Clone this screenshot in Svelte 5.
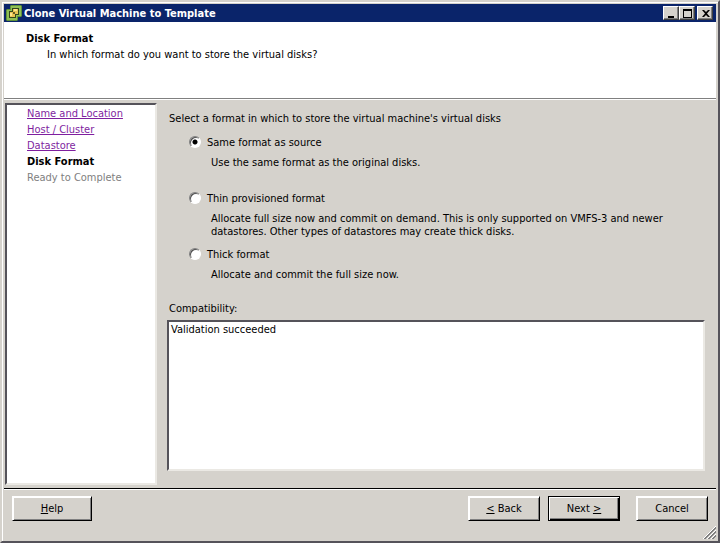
<script lang="ts">
  const steps = [
    { label: "Name and Location", state: "done" },
    { label: "Host / Cluster", state: "done" },
    { label: "Datastore", state: "done" },
    { label: "Disk Format", state: "current" },
    { label: "Ready to Complete", state: "pending" },
  ];

  const formats = [
    {
      id: "same",
      label: "Same format as source",
      description: "Use the same format as the original disks.",
    },
    {
      id: "thin",
      label: "Thin provisioned format",
      description:
        "Allocate full size now and commit on demand. This is only supported on VMFS-3 and newer datastores. Other types of datastores may create thick disks.",
    },
    {
      id: "thick",
      label: "Thick format",
      description: "Allocate and commit the full size now.",
    },
  ];

  let format = $state("same");
  let compatibility = $state("Validation succeeded");
</script>

<div class="window">
  <header class="titlebar">
    <svg class="app-icon" width="16" height="16" viewBox="0 0 16 16">
      <path d="M4 4V1l1-1h10l1 1v10l-1 1h-3v3l-1 1H1l-1-1V5l1-1z" fill="#5f9138" />
      <path d="M5 5V1h10v10h-4v4H1V5z" fill="#8fc055" />
      <path d="M6 3h7v7h-3v3H3V6h3z" fill="#33451d" />
      <path d="M7 4h5v5H7z" fill="#e9c552" />
      <path d="M4 7h5v5H4z" fill="#e9c552" />
      <path d="M7 7h2v2H7z" fill="#6b5a22" />
      <path d="M8 4h3v2H8zM4 8h2v3H4z" fill="#ffe58c" />
    </svg>
    <h1>Clone Virtual Machine to Template</h1>
    <div class="controls">
      <button class="control" aria-label="Minimize">
        <svg width="12" height="10"><path d="M3 8h6v2H3z" /></svg>
      </button>
      <button class="control" aria-label="Maximize">
        <svg width="12" height="10"><path d="M2 1h9v9H2zM3 3v6h7V3z" fill-rule="evenodd" /></svg>
      </button>
      <button class="control close" aria-label="Close">
        <svg width="12" height="10">
          <path d="M3 2h2l2 2 2-2h2L8 5.500 11 9H9L7 7 5 9H3l3-3.500z" />
        </svg>
      </button>
    </div>
  </header>

  <div class="banner">
    <h2>Disk Format</h2>
    <p>In which format do you want to store the virtual disks?</p>
  </div>

  <div class="body">
    <nav class="steps">
      {#each steps as step}
        {#if step.state === "done"}
          <a href="#{step.label}">{step.label}</a>
        {:else}
          <span class={step.state}>{step.label}</span>
        {/if}
      {/each}
    </nav>

    <main class="page">
      <fieldset>
        <legend>Select a format in which to store the virtual machine's virtual disks</legend>
        {#each formats as item}
          <div class="option">
            <input
              type="radio"
              id={item.id}
              name="format"
              value={item.id}
              bind:group={format}
              aria-describedby="{item.id}-description"
            />
            <label for={item.id}>{item.label}</label>
            <p id="{item.id}-description">{item.description}</p>
          </div>
        {/each}
      </fieldset>
      <label class="compat-label" for="compatibility">Compatibility:</label>
      <textarea id="compatibility" readonly value={compatibility}></textarea>
    </main>
  </div>

  <footer class="footer">
    <button class="button help"><u>H</u>elp</button>
    <button class="button"><u>&lt;</u> Back</button>
    <button class="button default">Next <u>&gt;</u></button>
    <button class="button cancel">Cancel</button>
    <svg class="grip" width="13" height="13">
      <path d="M0 13 13 0M4 13l9-9M8 13l5-5" stroke="#fff" />
      <path d="M1 13 13 1M2 13 13 2M5 13l8-8M6 13l7-7M9 13l4-4M10 13l3-3" stroke="#808080" />
    </svg>
  </footer>
</div>

<style>
  :global(body) {
    background: #d5d2cc;
  }

  .window {
    box-sizing: border-box;
    display: flex;
    flex-direction: column;
    min-height: 100vh;
    padding: 2px;
    border: 2px solid;
    border-color: #d5d2cc #55535a #55535a #d5d2cc;
    box-shadow: inset 1px 1px #fff, inset -1px -1px #d5d2cc;
    background: #d5d2cc;
    color: #000;
    font: 11px/13px Tahoma, "DejaVu Sans Condensed", sans-serif;
  }

  h1,
  h2,
  p {
    margin: 0;
    font-size: 11px;
  }

  .titlebar {
    display: flex;
    align-items: center;
    height: 18px;
    padding: 0 3px 0 2px;
    background: #0a246a;
    color: #fff;
  }

  h1 {
    flex: 1;
    margin-left: 2px;
  }

  .controls {
    display: flex;
  }

  .control {
    box-sizing: border-box;
    width: 16px;
    height: 14px;
    padding: 0 1px;
    border: 1px solid;
    border-color: #fff #404040 #404040 #fff;
    box-shadow: inset -1px -1px #808080;
    background: #d5d2cc;
  }

  .control svg {
    display: block;
  }

  .close {
    margin-left: 2px;
  }

  .banner {
    box-sizing: border-box;
    height: 77px;
    padding: 10px 22px;
    border-bottom: 1px solid #808080;
    background: #fff;
  }

  .banner h2 {
    margin-bottom: 3px;
  }

  .banner p {
    margin-left: 21px;
  }

  .body {
    display: flex;
    flex: 1;
    padding: 3px 0 3px 1px;
    border-top: 1px solid #fff;
  }

  .steps {
    box-sizing: border-box;
    display: flex;
    flex: 0 0 152px;
    flex-direction: column;
    padding: 1px 20px;
    border: 2px solid;
    border-color: #55535a #ebe9e4 #ebe9e4 #55535a;
    background: #fff;
    line-height: 16px;
  }

  .steps a {
    color: #7f1f9f;
  }

  .current {
    font-weight: bold;
  }

  .pending {
    color: #808080;
  }

  .page {
    display: flex;
    flex: 1;
    flex-direction: column;
    padding: 9px 11px 14px 10px;
  }

  fieldset {
    min-width: 0;
    margin: 0 0 21px 2px;
    padding: 0;
    border: 0;
  }

  legend {
    margin-bottom: 11px;
    padding: 0;
  }

  .option {
    display: grid;
    grid-template-columns: 18px 1fr;
    grid-auto-rows: min-content;
    row-gap: 7px;
    min-height: 56px;
    margin-left: 20px;
  }

  .option:last-child {
    min-height: 0;
  }

  .option p {
    grid-column: 2;
    max-width: 480px;
    margin-left: 4px;
  }

  .option input {
    appearance: none;
    box-sizing: border-box;
    width: 12px;
    height: 12px;
    margin: 0;
    border: 1px solid;
    border-color: #808080 #fff #fff #808080;
    border-radius: 50%;
    background: #fff;
    box-shadow: inset 1px 1px #505050;
  }

  .option input:checked {
    background: radial-gradient(circle, #000 2px, #fff 3px);
  }

  .compat-label {
    margin: 0 0 5px 2px;
  }

  textarea {
    box-sizing: border-box;
    flex: 1;
    width: 100%;
    padding: 1px 2px;
    border: 2px solid;
    border-color: #55535a #ebe9e4 #ebe9e4 #55535a;
    border-radius: 0;
    background: #fff;
    color: #000;
    font: inherit;
    outline: 0;
    resize: none;
  }

  .footer {
    position: relative;
    display: flex;
    gap: 8px;
    padding: 7px 8px 18px 8px;
    border-top: 1px solid #000;
    box-shadow: inset 0 1px #fff;
  }

  .button {
    box-sizing: border-box;
    width: 72px;
    height: 25px;
    padding: 0;
    border: 1px solid;
    border-color: #fff #000 #000 #fff;
    box-shadow: inset 1px 1px #fff, inset -1px -1px #808080;
    background: #d5d2cc;
    color: #000;
    font: inherit;
  }

  .help {
    width: 80px;
    margin-right: auto;
  }

  .default {
    border-color: #000;
    box-shadow: inset 1px 1px #fff, inset -1px -1px #000, inset -2px -2px #808080;
  }

  .cancel {
    margin-left: 8px;
  }

  .grip {
    position: absolute;
    right: 0;
    bottom: 0;
  }
</style>
